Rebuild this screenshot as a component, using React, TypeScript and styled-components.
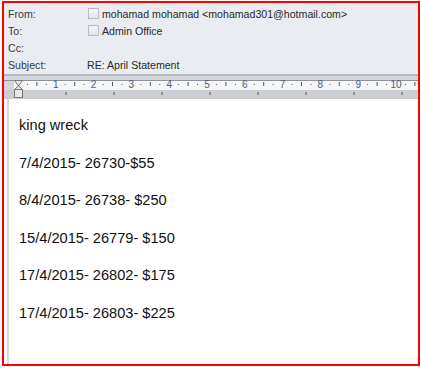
import styled, { createGlobalStyle } from "styled-components";

const Global = createGlobalStyle`
    html, body {
        margin:0;
        padding:0;
        background:#ffffff;
    }
`;

const Page = styled.div`
    width:421px;
    height:368px;
    padding:1px 2px 0 2px;
    box-sizing:border-box;
`;
const Frame = styled.div`
    width:418px;
    height:365px;
    border:2px solid #ff0000;
    box-sizing:border-box;
    display:flex;
    flex-direction:column;
    overflow:hidden;
`;
const Header = styled.div`
    background:#e9ecf0;
    height:71px;
    flex:none;
    padding:2px 0 0 4px;
    box-sizing:border-box;
    font-family:"Liberation Sans", Arial, sans-serif;
    font-size:10.6px;
    color:#2a2a2a;
`;
const Row = styled.div`
    display:flex;
    align-items:center;
    height:17px;
`;
const Label = styled.span`
    width:80px;
    color:#3b3b3b;
`;
const Value = styled.span`
    display:flex;
    align-items:center;
    gap:3px;
    margin-left:${p => (p.$plain ? "-1px" : "0")};
`;
const Check = styled.span`
    width:9px;
    height:9px;
    border:1px solid #b9bdc3;
    background:linear-gradient(#f4f5f7, #e4e6ea);
    display:inline-block;
`;
const RulerBar = styled.div`
    height:25px;
    flex:none;
`;
const Body = styled.div`
    flex:1;
    display:flex;
`;
const Gutter = styled.div`
    width:3px;
    margin-right:2px;
    background:#ffffff;
    border-right:2px solid #d5d9df;
`;
const Doc = styled.div`
    flex:1;
    padding:17px 0 0 8px;
    font-family:"Liberation Sans", Arial, sans-serif;
    font-size:14.6px;
    color:#101010;
`;
const Para = styled.p`
    margin:0 0 19.6px 0;
    line-height:18px;
`;

function Ruler() {
    const origin = 14;
    const cm = 37.8;
    const marks = [];
    for (let i = 0; i <= 10; i++) {
        const x = origin + i * cm;
        if (i > 0) {
            marks.push(
                <text key={"n" + i} x={x} y={13.5} fontSize="10" fill="#4e5d78"
                    fontFamily="Liberation Sans, Arial, sans-serif" textAnchor="middle">{i}</text>
            );
        }
        [0.25, 0.75].forEach(f => {
            const dx = x + f * cm;
            if (dx < 412) marks.push(<rect key={"d" + i + f} x={dx - 0.5} y={10} width={1} height={1} fill="#555" />);
        });
        const hx = x + 0.5 * cm;
        if (hx < 412) marks.push(<rect key={"h" + i} x={hx - 0.5} y={8} width={1} height={4} fill="#555" />);
    }
    const tabs = [];
    for (let t = origin + 48; t < 412; t += 48) {
        tabs.push(<rect key={"t" + t} x={t - 0.5} y={18} width={1} height={3} fill="#555" />);
    }
    return (
        <svg width="414" height="25" viewBox="0 0 414 25">
            <rect x="0" y="0" width="414" height="2" fill="#b6bac0" />
            <rect x="0" y="2" width="414" height="4" fill="#d3d6db" />
            <rect x="0" y="6" width="414" height="1" fill="#8e9399" />
            <rect x="0" y="7" width="414" height="9" fill="#f6f6f6" />
            <rect x="0" y="7" width="10" height="9" fill="#d3d6db" />
            <rect x="0" y="16" width="414" height="9" fill="#cbced3" />
            {marks}
            {tabs}
            <path d="M10.5 6.5 H18.5 L14.5 12 L18.5 15.5 H10.5 L14.5 12 Z" fill="#e8e8e8" stroke="#777" />
            <rect x="10.5" y="15.5" width="8" height="8" fill="#e8e8e8" stroke="#777" />
        </svg>
    );
}

export default function App() {
    return (
        <>
            <Global />
            <Page>
                <Frame>
                    <Header>
                        <Row>
                            <Label>From:</Label>
                            <Value><Check />mohamad mohamad &lt;mohamad301@hotmail.com&gt;</Value>
                        </Row>
                        <Row>
                            <Label>To:</Label>
                            <Value><Check />Admin Office</Value>
                        </Row>
                        <Row>
                            <Label>Cc:</Label>
                        </Row>
                        <Row>
                            <Label>Subject:</Label>
                            <Value $plain>RE: April Statement</Value>
                        </Row>
                    </Header>
                    <RulerBar>
                        <Ruler />
                    </RulerBar>
                    <Body>
                        <Gutter />
                        <Doc>
                            <Para>king wreck</Para>
                            <Para>7/4/2015- 26730-$55</Para>
                            <Para>8/4/2015- 26738- $250</Para>
                            <Para>15/4/2015- 26779- $150</Para>
                            <Para>17/4/2015- 26802- $175</Para>
                            <Para>17/4/2015- 26803- $225</Para>
                        </Doc>
                    </Body>
                </Frame>
            </Page>
        </>
    );
}
